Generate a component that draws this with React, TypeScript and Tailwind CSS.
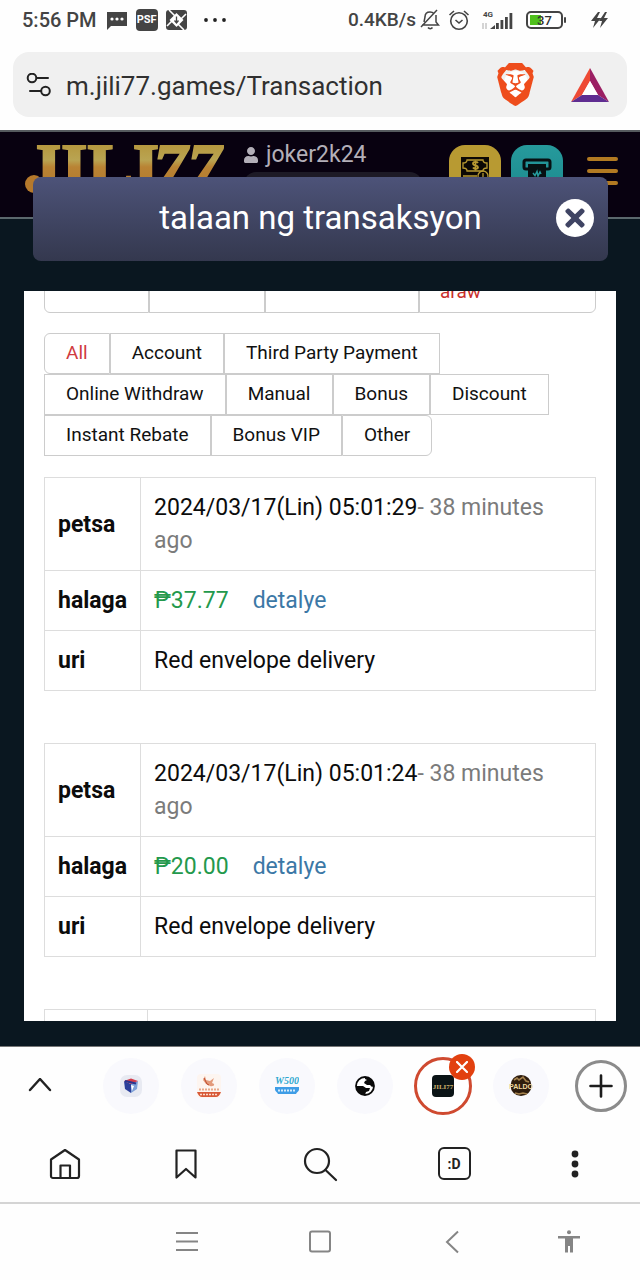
import type { ReactNode } from 'react';
import { FaTimes, FaUser } from 'react-icons/fa';
import { SiBrave } from 'react-icons/si';

interface Transaction {
  date: string;
  ago: string;
  amount: string;
  kind: string;
}

const transactions: Transaction[] = [
  { date: '2024/03/17(Lin) 05:01:29', ago: '38 minutes ago', amount: '₱37.77', kind: 'Red envelope delivery' },
  { date: '2024/03/17(Lin) 05:01:24', ago: '38 minutes ago', amount: '₱20.00', kind: 'Red envelope delivery' },
];

const filterRows = [
  ['All', 'Account', 'Third Party Payment'],
  ['Online Withdraw', 'Manual', 'Bonus', 'Discount'],
  ['Instant Rebate', 'Bonus VIP', 'Other'],
];

const StatusBar = () => (
  <div className="flex h-10 shrink-0 items-center pl-[22px] pr-8 text-xl font-medium text-[#444]">
    <span>5:56 PM</span>
    <svg className="ml-[10px] h-[22px] w-5" viewBox="0 0 20 22" fill="#444">
      <path d="M0 3h20v14H4l-4 4z" />
      <g fill="#fff">
        <circle cx="5" cy="10" r="1.6" />
        <circle cx="10" cy="10" r="1.6" />
        <circle cx="15" cy="10" r="1.6" />
      </g>
    </svg>
    <span className="ml-[9px] flex h-[22px] w-[22px] items-center justify-center rounded bg-[#444] text-[11px] font-bold text-white">PSF</span>
    <svg className="ml-2 h-[22px] w-[22px]" viewBox="0 0 22 22">
      <rect x="0" y="1" width="21" height="20" rx="3" fill="#444" />
      <path d="M10.500 4l7 7-7 7-7-7z" fill="#fff" />
      <path d="M3 1l8 8M20 5l-6 6M1 17l6-6M12 15l6 6" stroke="#fff" strokeWidth="1.600" />
      <path d="M10.500 7.500v6M8.500 11.500l2 2.500 2-2.500" stroke="#444" strokeWidth="1.300" fill="none" />
    </svg>
    <svg className="ml-4 h-[6px] w-[22px]" viewBox="0 0 22 6" fill="#222">
      <circle cx="2" cy="3" r="1.900" />
      <circle cx="11" cy="3" r="1.900" />
      <circle cx="20" cy="3" r="1.900" />
    </svg>

    <span className="ml-auto text-[19px]">0.4KB/s</span>
    <svg className="ml-1 h-6 w-5" viewBox="0 0 20 24" fill="none" stroke="#444" strokeWidth="1.500">
      <path d="M2 17h16.500l-2.500-3V7M4 14l1-5c0-3 2-5 5-5 2 0 3 .5 4 1.500M1 19L17 2" />
      <path d="M8 19.500c1 1.500 3.500 1.500 4.500 0" />
    </svg>
    <svg className="ml-2 h-6 w-[22px]" viewBox="0 0 22 24" fill="none" stroke="#444" strokeWidth="1.600">
      <circle cx="11" cy="13" r="8.300" />
      <path d="M1.500 7l4.500-4M20.500 7L16 3M7.500 12l3.500 3 3.500-3" />
    </svg>
    <svg className="ml-3 h-[22px] w-8" viewBox="0 0 32 22" fill="#444">
      <text x="1" y="8" fontSize="8" fontWeight="700" fontFamily="Roboto, sans-serif">4G</text>
      <path d="M8 20l5-4v4zM14 14h2.800v6H14zM18.500 11h2.800v9h-2.800zM23 8h2.800v12H23zM27.500 4h2.800v16h-2.800z" />
      <path d="M1 20v-6M4 14v6" stroke="#aaa" />
    </svg>
    <svg className="ml-3 h-[18px] w-[41px]" viewBox="0 0 41 18">
      <rect x="1" y="1" width="35" height="16" rx="4" fill="#fff" stroke="#444" strokeWidth="2" />
      <rect x="4" y="4" width="11" height="10" fill="#4fc01c" />
      <rect x="38" y="6" width="2" height="6" rx="1" fill="#444" />
      <text x="18.500" y="13.500" fontSize="13" textAnchor="middle" fill="#333" fontFamily="Roboto, sans-serif">37</text>
    </svg>
    <svg className="ml-6 h-[18px] w-[17px]" viewBox="0 0 17 18" fill="#444">
      <path d="M7 1L0 10h4l-2 7 8-10H6l3-6zM14 1L8 10h3l-2 7 8-10h-4l3-6z" />
    </svg>
  </div>
);

const AddressBar = () => (
  <form className="mx-[13px] mb-[13px] mt-3 flex h-[65px] shrink-0 items-center rounded-2xl bg-[#f0f0f0] pl-[13px] pr-[18px]">
    <svg className="h-6 w-[26px] shrink-0" viewBox="0 0 26 24" fill="none" stroke="#222" strokeWidth="2" strokeLinecap="round">
      <circle cx="6" cy="5" r="4.300" />
      <path d="M11 5h11M4 18h11" />
      <circle cx="19.500" cy="18" r="4.300" />
    </svg>
    <input
      aria-label="Address"
      defaultValue="m.jili77.games/Transaction"
      className="ml-[14px] min-w-0 flex-1 bg-transparent pt-1 text-[26px] text-[#303030] outline-none"
    />
    <button type="button" aria-label="Brave Shields" className="grid h-[43px] w-[43px] place-items-center">
      <span className="h-7 w-6 rounded-full bg-white [grid-area:1/1]" />
      <SiBrave className="h-[43px] w-[43px] text-[#ee4d1c] [grid-area:1/1]" />
    </button>
    <button type="button" aria-label="Brave Rewards" className="ml-[34px]">
      <svg className="h-[34px] w-[38px]" viewBox="0 0 38 34">
        <path d="M19 0L0 34l11-7 8-14z" fill="#ee4a35" />
        <path d="M19 0l19 34-11-7-8-14z" fill="#9b1f63" />
        <path d="M0 34h38l-11-7H11z" fill="#5f2d91" />
        <path d="M19 13l8 14H11z" fill="#fff" />
      </svg>
    </button>
  </form>
);

const SiteHeader = () => (
  <header className="h-[89px] border-y-2 border-t-[#555a5e] border-b-[#5b686d] bg-[#080110] [grid-area:1/1]">
    <div className="flex items-start pl-6 pr-[22px]">
      <svg className="h-[70px] w-[200px] shrink-0" viewBox="0 0 200 70">
        <defs>
          <linearGradient id="gold" x1="0" y1="0" x2="0" y2="70" gradientUnits="userSpaceOnUse">
            <stop offset="0.150" stopColor="#b5963c" />
            <stop offset="0.400" stopColor="#b9a452" />
            <stop offset="0.500" stopColor="#b98334" />
            <stop offset="1" stopColor="#b0752a" />
          </linearGradient>
        </defs>
        <g fill="url(#gold)" stroke="url(#gold)" strokeWidth="2" fontSize="68" fontWeight="700" fontFamily="'Liberation Serif', serif">
          <text x="3" y="58">JILI</text>
          <text x="129" y="58" fontStyle="italic">77</text>
        </g>
        <circle cx="10" cy="52" r="9" fill="#b5792c" />
      </svg>
      <div className="ml-5 mt-2 w-[178px]">
        <p className="flex items-center gap-2 text-[23px] leading-[30px] text-[#b3afb8]">
          <FaUser className="h-4 w-[14px]" />
          joker2k24
        </p>
        <div className="mt-[2px] h-10 rounded-xl bg-[#1d1a26]" />
      </div>
      <div className="ml-auto mt-[13px] flex gap-[10px]">
        <button aria-label="Deposit" className="h-[52px] w-[52px] rounded-2xl bg-[#b89a32]">
          <svg className="h-[52px] w-[52px]" viewBox="0 0 52 52" fill="none" stroke="#b89a32" strokeWidth="1.300">
            <rect x="12" y="12" width="28" height="28" fill="#0b0905" stroke="none" />
            <path d="M18 15h16c0 2 2 3 4 3v5c-2 0-4 1-4 3H18c0-2-2-3-4-3v-5c2 0 4-1 4-3zM14 31h14" />
            <circle cx="34" cy="31" r="5" />
            <path d="M34 28v6" />
            <path d="M29 18c-1-1.500-5-1.500-5 .7 0 2.300 5 1.300 5 3.500 0 2-4 2-5 .3M26.500 15.500v10" strokeWidth="1.800" />
          </svg>
        </button>
        <button aria-label="Withdraw" className="h-[52px] w-[52px] rounded-2xl bg-linear-to-b from-[#269a9c] to-[#1c8a8e]">
          <svg className="h-[52px] w-[52px]" viewBox="0 0 52 52">
            <rect x="13" y="15" width="26" height="9" rx="2" fill="none" stroke="#071012" strokeWidth="3" />
            <path d="M17 19h18v20H17z" fill="#071012" />
            <path d="M22 28l2 2.500 2-4 1 4.500 2-4 1 2" stroke="#269a9c" strokeWidth="1.500" fill="none" />
          </svg>
        </button>
      </div>
      <button aria-label="Menu" className="ml-6 mt-[25px] flex w-[31px] flex-col gap-2">
        <span className="h-1 w-full rounded-full bg-[#b27a22]" />
        <span className="h-1 w-full rounded-full bg-[#b27a22]" />
        <span className="h-1 w-full rounded-full bg-[#b27a22]" />
      </button>
    </div>
  </header>
);

const DateTabs = () => (
  <div className="-mt-5 flex text-[19px] text-[#c9302c]">
    <button aria-label="Ngayon" className="h-[42px] w-[105px] rounded-l-md border border-[#ccc]" />
    <button aria-label="Kahapon" className="h-[42px] w-[116px] border border-[#ccc]" />
    <button aria-label="Linggo" className="h-[42px] w-[154px] border border-[#ccc]" />
    <button className="h-[42px] flex-1 rounded-r-md border border-[#ccc] px-5 text-left">araw</button>
  </div>
);

const FilterTabs = () => (
  <div className="mt-5 text-[19px] text-[#111]">
    {filterRows.map((row, r) => (
      <div key={r} className="flex">
        {row.map((label) => (
          <button
            key={label}
            className={`h-[41px] border border-[#ccc] px-[21px] ${label === 'All' ? 'rounded-l-md text-[#d03b40]' : ''} ${label === 'Other' ? 'rounded-r-md' : ''}`}
          >
            {label}
          </button>
        ))}
      </div>
    ))}
  </div>
);

const rowHead = 'border border-[#ddd] px-[13px] py-[13px] text-left font-bold';
const rowCell = 'border border-[#ddd] px-[13px] py-[13px]';

const TransactionTable = ({ item }: { item: Transaction }) => (
  <table className="mb-[52px] w-full border-collapse text-[23px] leading-[33px] text-[#0c0c0c]">
    <tbody>
      <tr>
        <th scope="row" className={`${rowHead} w-24`}>petsa</th>
        <td className={rowCell}>
          {item.date}
          <span className="text-[#7b7b7b]">- {item.ago}</span>
        </td>
      </tr>
      <tr>
        <th scope="row" className={rowHead}>halaga</th>
        <td className={rowCell}>
          <span className="text-[#23994c]">{item.amount}</span>
          <a href="#detalye" className="ml-6 text-[#3c78a6]">detalye</a>
        </td>
      </tr>
      <tr>
        <th scope="row" className={rowHead}>uri</th>
        <td className={rowCell}>{item.kind}</td>
      </tr>
    </tbody>
  </table>
);

const TransactionDialog = () => (
  <div role="dialog" aria-labelledby="dialog-title" className="relative flex min-h-0 flex-col px-6 pb-[25px] pt-[47px] [grid-area:1/1]">
    <div className="ml-[9px] mr-2 flex h-[84px] shrink-0 items-center rounded-lg bg-linear-to-b from-[#4d5379] to-[#34384e] pb-[2px] pl-[52px] pr-[14px]">
      <h1 id="dialog-title" className="flex-1 text-center text-[33px] text-white">talaan ng transaksyon</h1>
      <button aria-label="Close" className="flex h-[38px] w-[38px] items-center justify-center rounded-full bg-white text-[#3f4463]">
        <FaTimes className="h-7 w-6" />
      </button>
    </div>
    <div className="mt-[30px] min-h-0 flex-1 overflow-hidden bg-white px-5">
      <DateTabs />
      <FilterTabs />
      <div className="pt-[21px]">
        {transactions.map((item) => (
          <TransactionTable key={item.date} item={item} />
        ))}
        <table className="w-full border-collapse">
          <tbody>
            <tr className="h-24">
              <th scope="row" className="w-[103px] border border-[#ddd]" />
              <td className="border border-[#ddd]" />
            </tr>
          </tbody>
        </table>
      </div>
    </div>
  </div>
);

const Tab = ({ label, children }: { label: string; children: ReactNode }) => (
  <button aria-label={label} className="flex h-14 w-14 items-center justify-center rounded-full bg-[#f9f9fd]">
    {children}
  </button>
);

const TabStrip = () => (
  <div className="flex h-[79px] shrink-0 items-center border-t border-[#777] pl-5 pr-[13px]">
    <button aria-label="Expand tabs" className="flex w-10 justify-center">
      <svg className="h-4 w-6" viewBox="0 0 24 16" fill="none" stroke="#222" strokeWidth="2.400" strokeLinecap="round">
        <path d="M2 12L12 1l10 11" />
      </svg>
    </button>
    <div className="ml-auto mr-[26px] flex gap-[22px]">
      <Tab label="Cube games">
        <svg className="h-6 w-6" viewBox="0 0 24 24">
          <rect x="1" y="1" width="22" height="22" rx="7" fill="#e8eaf2" />
          <path d="M5 7l7 3v9l-6-4z" fill="#2b3f9b" />
          <path d="M12 10l7-3-1 8-6 4z" fill="#7d9fd6" />
          <path d="M5 7l7-2.500L19 7l-7 3z" fill="#d23a4a" />
          <path d="M6 7l11 2.500" stroke="#27348f" strokeWidth="2" />
          <path d="M12 11l3 1-2 5" fill="#fff" />
        </svg>
      </Tab>
      <Tab label="Mascot">
        <svg className="h-6 w-6" viewBox="0 0 24 24">
          <rect width="24" height="24" rx="4" fill="#fdf5f0" />
          <path d="M8 2l1 4 4 1 4-3-2 5c4 1 2 4-2 3l-4-2-3-4z" fill="#e39a7a" />
          <path d="M7 4l3 6 2 1" stroke="#c04a2c" fill="none" />
          <path d="M2 15.500h20" stroke="#e8a98a" strokeWidth="2" strokeDasharray="2 1" />
          <path d="M0 18h24c-1 3-3 5-5 5H5c-2 0-4-2-5-5z" fill="#d85a38" />
          <path d="M3 20.500h18" stroke="#fbdccd" strokeWidth="1.500" strokeDasharray="2 1" />
        </svg>
      </Tab>
      <Tab label="W500">
        <svg className="h-6 w-6" viewBox="0 0 24 24">
          <text x="12" y="10" fontSize="10" fontWeight="700" fontStyle="italic" textAnchor="middle" fill="#2fa8cf" fontFamily="'Liberation Serif', serif">W500</text>
          <path d="M0 13h24v3c-1 2-2 2-3 4H3c-1-2-2-2-3-4z" fill="#3f9de6" />
          <path d="M3 16.500h18" stroke="#d6ecfb" strokeWidth="2" strokeDasharray="2 1" />
        </svg>
      </Tab>
      <Tab label="Website">
        <svg className="h-5 w-5" viewBox="0 0 20 20">
          <circle cx="10" cy="10" r="9" fill="#fff" stroke="#0a0a0a" strokeWidth="1.800" />
          <path d="M1 10h7l3 2h4l-1 3-3 1-1 3C5 19 1 15 1 10zM10 1c5 0 9 4 9 9l-2 1-2-2h-3l-3-2 1-2 2-1-2-1z" fill="#0a0a0a" />
        </svg>
      </Tab>
      <div className="relative">
        <button aria-label="JILI77" className="-m-px flex h-[58px] w-[58px] items-center justify-center rounded-full border-3 border-[#cf4a30] bg-white">
          <svg className="h-[22px] w-[22px]" viewBox="0 0 22 22">
            <rect width="22" height="22" rx="4" fill="#0b1416" />
            <text x="11" y="14" fontSize="7" fontWeight="700" textAnchor="middle" fill="#cdb26c" fontFamily="'Liberation Serif', serif">JILI77</text>
          </svg>
        </button>
        <button aria-label="Close tab" className="absolute -right-1 -top-1 flex h-[26px] w-[26px] items-center justify-center rounded-full bg-[#e2400f]">
          <svg className="h-3 w-3" viewBox="0 0 12 12" stroke="#fff" strokeWidth="2.200" strokeLinecap="round">
            <path d="M1 1l10 10M11 1L1 11" />
          </svg>
        </button>
      </div>
      <Tab label="Paldo">
        <svg className="h-6 w-6" viewBox="0 0 24 24">
          <circle cx="12" cy="11.500" r="10.500" fill="#2e1c0d" />
          <path d="M5 6l3-2 2 2 4-3 3 4 3 1M6 19l4 1 4-1 4 1" stroke="#a5824d" strokeWidth="1.600" fill="none" />
          <text x="12" y="15" fontSize="7" fontWeight="700" textAnchor="middle" fill="#eed9a0" fontFamily="'Liberation Sans', sans-serif">PALDO</text>
        </svg>
      </Tab>
    </div>
    <button aria-label="New tab" className="flex h-[52px] w-[52px] items-center justify-center rounded-full border-3 border-[#8b8b8b]">
      <svg className="h-6 w-6" viewBox="0 0 24 24" stroke="#1c1c1c" strokeWidth="2.600" strokeLinecap="round">
        <path d="M12 1.500v21M1.500 12h21" />
      </svg>
    </button>
  </div>
);

const Toolbar = () => (
  <nav className="grid h-[79px] shrink-0 grid-cols-[130fr_112fr_156fr_112fr_130fr] place-items-center border-b-2 border-[#d4d4d4]">
    <button aria-label="Home">
      <svg className="h-8 w-8" viewBox="0 0 32 32" fill="none" stroke="#222" strokeWidth="2.200" strokeLinejoin="round">
        <path d="M2 11.500L16 2l14 9.500V28c0 1-.7 2-2 2H4c-1.300 0-2-1-2-2zM11.500 30V17.500h9.500V30" />
      </svg>
    </button>
    <button aria-label="Bookmarks">
      <svg className="h-8 w-8" viewBox="0 0 32 32" fill="none" stroke="#222" strokeWidth="2.200" strokeLinejoin="round">
        <path d="M6.500 2.500h19v27L16 21l-9.500 8.500z" />
      </svg>
    </button>
    <button aria-label="Search">
      <svg className="h-9 w-9" viewBox="0 0 36 36" fill="none" stroke="#222" strokeWidth="2.200" strokeLinecap="round">
        <circle cx="15" cy="15" r="12" />
        <path d="M23.500 24L34 34" />
      </svg>
    </button>
    <button aria-label="Tabs" className="flex h-[33px] w-[33px] items-center justify-center rounded-md border-2 border-[#222] text-sm font-bold text-[#222]">
      :D
    </button>
    <button aria-label="More">
      <svg className="h-7 w-2" viewBox="0 0 8 28" fill="#222">
        <circle cx="4" cy="4" r="3.400" />
        <circle cx="4" cy="14" r="3.400" />
        <circle cx="4" cy="24" r="3.400" />
      </svg>
    </button>
  </nav>
);

const SystemNav = () => (
  <nav className="grid h-[76px] shrink-0 grid-cols-[120fr_134fr_132fr_134fr_98fr_22fr] place-items-center">
    <button aria-label="Recent apps" className="col-start-2">
      <svg className="h-6 w-6" viewBox="0 0 24 24" stroke="#858585" strokeWidth="2">
        <path d="M1 3h22M1 11.500h22M1 20h22" />
      </svg>
    </button>
    <button aria-label="Home screen">
      <svg className="h-6 w-6" viewBox="0 0 24 24" fill="none" stroke="#858585" strokeWidth="2">
        <rect x="2" y="1.500" width="20" height="20" rx="2" />
      </svg>
    </button>
    <button aria-label="Back">
      <svg className="h-6 w-6" viewBox="0 0 24 24" fill="none" stroke="#858585" strokeWidth="2">
        <path d="M17 1.500L6 12l11 10.500" />
      </svg>
    </button>
    <button aria-label="Accessibility">
      <svg className="h-6 w-6" viewBox="0 0 24 24" fill="#858585">
        <circle cx="12" cy="2.200" r="2" />
        <path d="M1 6h22v2.500h-7V22.500h-3V16h-2v6.500H8V8.500H1z" />
      </svg>
    </button>
  </nav>
);

export default function App() {
  return (
    <div className="flex h-screen flex-col bg-[#fefefe] font-[Roboto,sans-serif]">
      <StatusBar />
      <AddressBar />
      <main className="grid min-h-0 flex-1 grid-cols-1 grid-rows-[minmax(0,1fr)] bg-[#0a1720]">
        <SiteHeader />
        <TransactionDialog />
      </main>
      <TabStrip />
      <Toolbar />
      <SystemNav />
    </div>
  );
}
